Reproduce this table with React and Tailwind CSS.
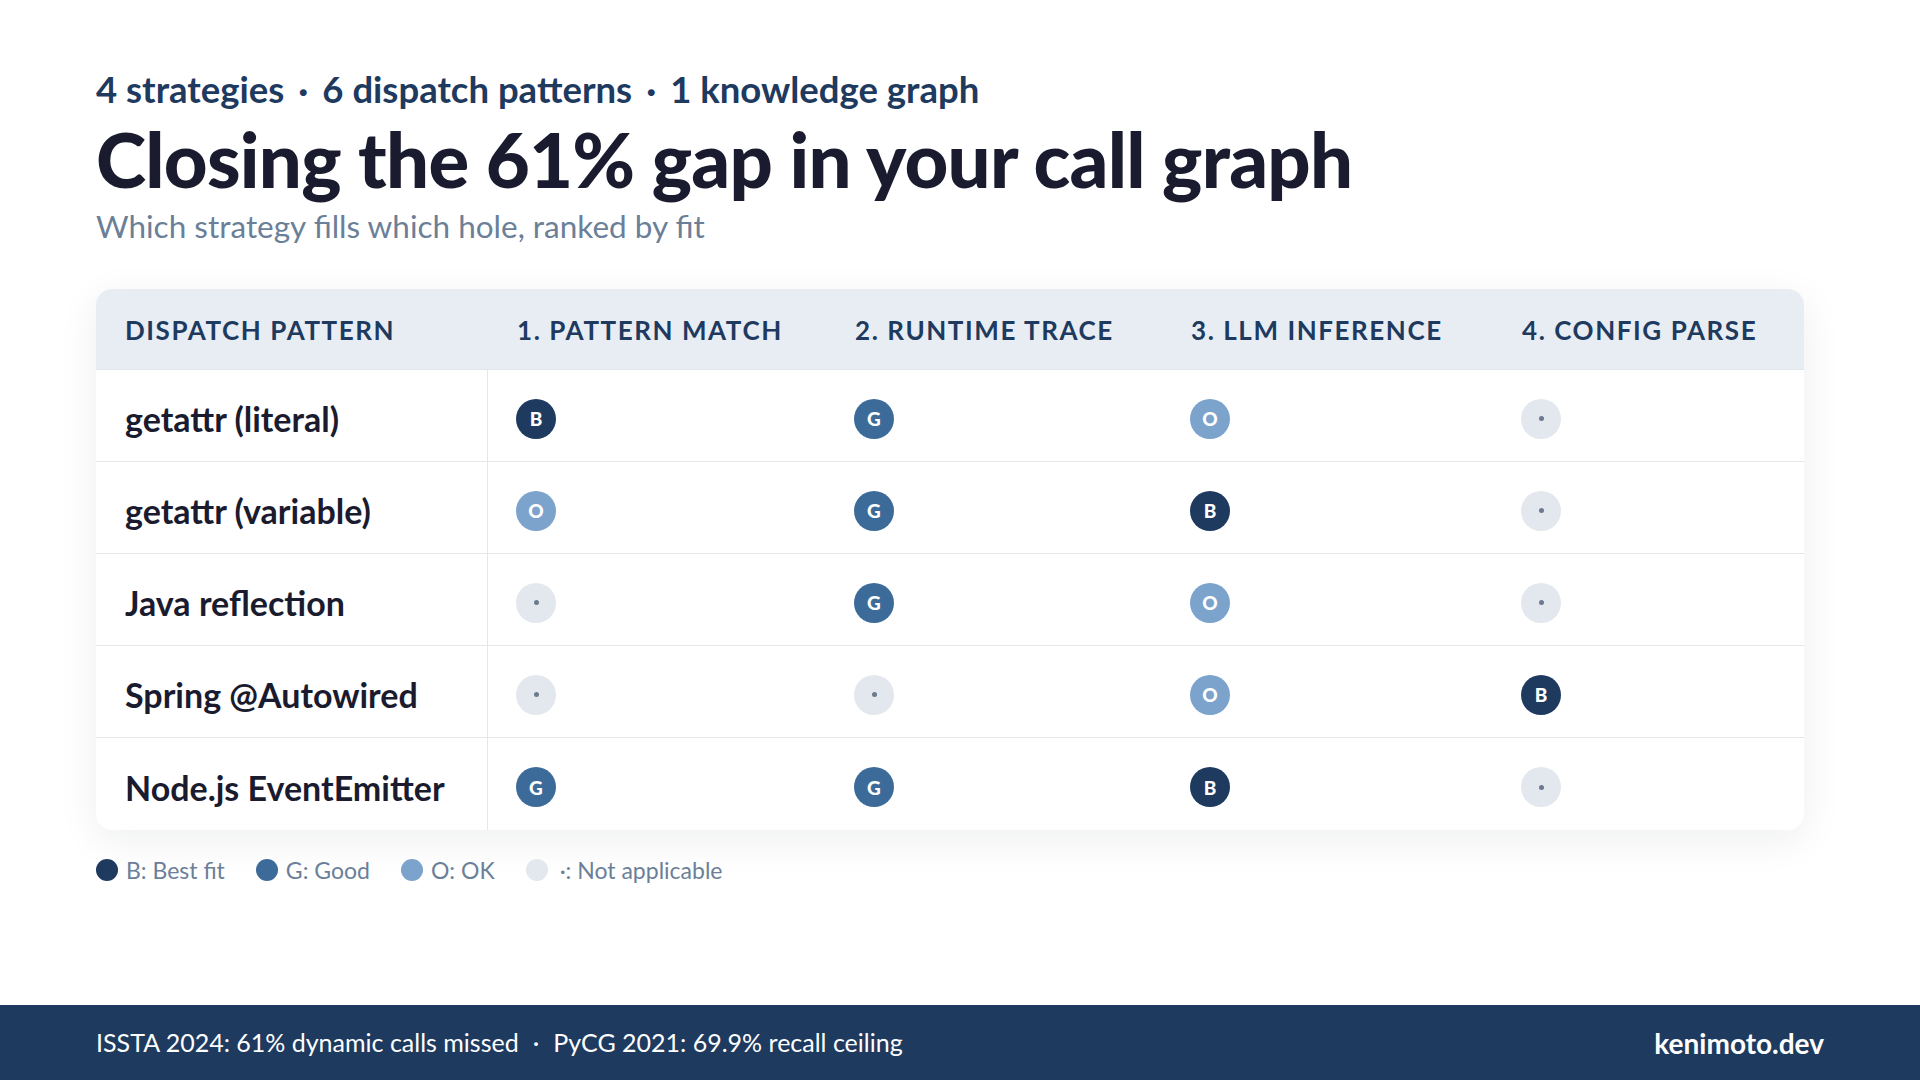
import React from "react";

const COLORS = {
  B: "bg-[#1e3a5f] text-white",
  G: "bg-[#3d6b99] text-white",
  O: "bg-[#7ba3cc] text-white",
  N: "bg-[#e3e7ee] text-[#6b7a90]",
};

function Badge({ v }) {
  return (
    <div
      className={`w-10 h-10 rounded-full flex items-center justify-center text-[19px] font-black leading-none ${COLORS[v]}`}
    >
      {v === "N" ? <span className="w-[5px] h-[5px] rounded-full bg-[#6b7a90]" /> : v}
    </div>
  );
}

const rows = [
  ["getattr (literal)", "B", "G", "O", "N"],
  ["getattr (variable)", "O", "G", "B", "N"],
  ["Java reflection", "N", "G", "O", "N"],
  ["Spring @Autowired", "N", "N", "O", "B"],
  ["Node.js EventEmitter", "G", "G", "B", "N"],
];

const headers = [
  "Dispatch pattern",
  "1. Pattern match",
  "2. Runtime trace",
  "3. LLM inference",
  "4. Config parse",
];

const grid = "grid grid-cols-[392px_338px_336px_331px_1fr]";

export default function App() {
  return (
    <div className="w-[1920px] h-[1080px] bg-white flex flex-col font-['Lato','Noto_Sans',sans-serif] overflow-hidden">
      <main className="flex-1 px-[96px] pt-[69px]">
        <div className="text-[36.5px] leading-[40px] font-bold text-[#1e3a5f] flex items-center">
          <span>4 strategies</span>
          <span className="mx-[14px]">·</span>
          <span>6 dispatch patterns</span>
          <span className="mx-[14px]">·</span>
          <span>1 knowledge graph</span>
        </div>
        <h1 className="mt-[11px] text-[76px] leading-[78px] font-black tracking-[-0.01em] text-[#1a1b2e]">
          Closing the 61% gap in your call graph
        </h1>
        <p className="mt-[12px] text-[31.5px] leading-[32px] text-[#6b7f99]">
          Which strategy fills which hole, ranked by fit
        </p>

        <div className="mt-[47px] w-[1708px] rounded-[16px] bg-white shadow-[0_10px_40px_rgba(15,23,42,0.07)] overflow-hidden">
          <div className={`${grid} h-[81px] bg-[#e8edf4] border-b border-[#e2e6eb]`}>
            {headers.map((h) => (
              <div
                key={h}
                className="flex items-center px-[29px] pt-[2px] text-[26px] font-bold uppercase tracking-[0.06em] text-[#1e3a5f]"
              >
                {h}
              </div>
            ))}
          </div>
          {rows.map((r, i) => (
            <div
              key={r[0]}
              className={`${grid} h-[92px] ${i < rows.length - 1 ? "border-b border-[#e5e7eb]" : ""}`}
            >
              <div className="flex items-center px-[29px] pt-[6px] border-r border-[#e5e7eb] text-[34px] font-bold text-[#1a1b2e]">
                {r[0]}
              </div>
              {r.slice(1).map((v, j) => (
                <div key={j} className="flex items-center px-[28px] pt-[6px]">
                  <Badge v={v} />
                </div>
              ))}
            </div>
          ))}
        </div>

        <div className="mt-[26px] flex items-center gap-[31px] text-[23px] leading-[28px] text-[#6b7f99]">
          <div className="flex items-center gap-[8px]">
            <span className="w-[22px] h-[22px] rounded-full bg-[#1e3a5f]" />
            <span>B: Best fit</span>
          </div>
          <div className="flex items-center gap-[8px]">
            <span className="w-[22px] h-[22px] rounded-full bg-[#3d6b99]" />
            <span>G: Good</span>
          </div>
          <div className="flex items-center gap-[8px]">
            <span className="w-[22px] h-[22px] rounded-full bg-[#7ba3cc]" />
            <span>O: OK</span>
          </div>
          <div className="flex items-center gap-[8px]">
            <span className="w-[22px] h-[22px] rounded-full bg-[#e3e7ee]" />
            <span className="ml-[4px]">·: Not applicable</span>
          </div>
        </div>
      </main>

      <footer className="h-[75px] bg-[#1e3a5f] px-[96px] flex items-center justify-between text-white">
        <div className="text-[25px] flex items-center">
          <span>ISSTA 2024: 61% dynamic calls missed</span>
          <span className="mx-[14px]">·</span>
          <span>PyCG 2021: 69.9% recall ceiling</span>
        </div>
        <div className="text-[28px] font-bold">kenimoto.dev</div>
      </footer>
    </div>
  );
}
